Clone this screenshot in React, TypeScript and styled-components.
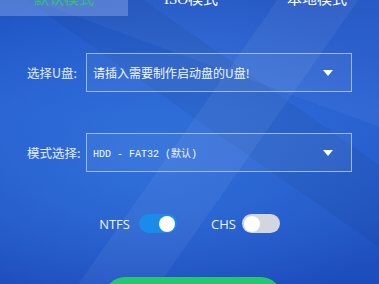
import React, { useState } from "react";
import styled, { createGlobalStyle } from "styled-components";

const GlobalStyle = createGlobalStyle`
  html, body {
    margin: 0;
    padding: 0;
    background: #1f4fbf;
  }
  * {
    box-sizing: border-box;
  }
`;

const Screen = styled.div`
  position: relative;
  width: 379px;
  height: 284px;
  overflow: hidden;
  display: flex;
  flex-direction: column;
  font-family: "Noto Sans CJK SC", "Noto Sans", sans-serif;
  color: #ffffff;
  background:
    linear-gradient(125deg, transparent 0 48%, rgba(255, 255, 255, 0.05) 48% 62%, transparent 62%),
    linear-gradient(35deg, transparent 0 55%, rgba(0, 0, 0, 0.05) 55% 70%, transparent 70%),
    linear-gradient(200deg, rgba(255, 255, 255, 0.04) 0 30%, transparent 30%),
    radial-gradient(ellipse 70% 60% at 40% 55%, #3070db 0%, rgba(48, 112, 219, 0) 100%),
    linear-gradient(180deg, #1f54c4 0%, #2860d0 40%, #2357c6 75%, #1d4bbb 100%);
`;

const TabBar = styled.div`
  display: flex;
  height: 33px;
  margin-top: -17px;
  flex-shrink: 0;
`;

const Tab = styled.div<{ $active?: boolean }>`
  width: 126px;
  flex-shrink: 0;
  text-align: center;
  line-height: 33px;
  font-family: "Liberation Serif", "Noto Sans CJK SC", serif;
  font-size: 15px;
  color: ${({ $active }) => ($active ? "#2fc277" : "#ffffff")};
  background: ${({ $active }) => ($active ? "rgba(140, 170, 235, 0.45)" : "transparent")};
  &:first-child {
    width: 128px;
  }
`;

const Form = styled.div`
  display: flex;
  flex-direction: column;
  gap: 41px;
  padding: 37px 27px 0 27px;
`;

const Row = styled.div`
  display: flex;
  align-items: center;
`;

const Label = styled.div`
  width: 59px;
  flex-shrink: 0;
  font-size: 12.5px;
  color: #e4ebf8;
  white-space: nowrap;
`;

const SelectBox = styled.div`
  width: 266px;
  height: 39px;
  display: flex;
  align-items: center;
  justify-content: space-between;
  padding: 0 18px 0 6px;
  border: 1px solid rgba(190, 210, 245, 0.75);
  background: rgba(255, 255, 255, 0.05);
  cursor: pointer;
`;

const SelectText = styled.span<{ $mono?: boolean }>`
  font-family: ${({ $mono }) =>
    $mono
      ? `"Liberation Mono", "Noto Sans CJK SC", monospace`
      : `"Noto Sans CJK SC", sans-serif`};
  font-size: ${({ $mono }) => ($mono ? "10px" : "12px")};
  color: #f4f7ff;
  white-space: nowrap;
`;

const Arrow = styled.span`
  width: 0;
  height: 0;
  border-left: 5px solid transparent;
  border-right: 5px solid transparent;
  border-top: 6px solid #ffffff;
`;

const Switches = styled.div`
  display: flex;
  justify-content: center;
  align-items: center;
  gap: 34px;
  margin-top: 42px;
`;

const SwitchItem = styled.label<{ $gap: number }>`
  display: flex;
  align-items: center;
  gap: ${({ $gap }) => $gap}px;
  font-family: "Open Sans", "Noto Sans", sans-serif;
  font-size: 13px;
  color: #eef3ff;
  cursor: pointer;
`;

const Track = styled.span<{ $on: boolean }>`
  position: relative;
  width: 38px;
  height: 19px;
  border-radius: 10px;
  background: ${({ $on }) => ($on ? "#1b8bea" : "#d2d6de")};
`;

const Knob = styled.span<{ $on: boolean }>`
  position: absolute;
  top: 1.5px;
  left: ${({ $on }) => ($on ? "20px" : "2px")};
  width: 16px;
  height: 16px;
  border-radius: 50%;
  background: #ffffff;
`;

const StartButton = styled.button`
  align-self: center;
  margin: 44px 0 0 6px;
  width: 176px;
  height: 40px;
  border: none;
  border-radius: 20px;
  background: #27c56f;
  color: #ffffff;
  font-family: "Noto Sans CJK SC", sans-serif;
  font-size: 16px;
  flex-shrink: 0;
`;

function Switch({ label, initial, gap }: { label: string; initial: boolean; gap: number }) {
  const [on, setOn] = useState(initial);
  return (
    <SwitchItem $gap={gap} onClick={() => setOn(!on)}>
      {label}
      <Track $on={on}>
        <Knob $on={on} />
      </Track>
    </SwitchItem>
  );
}

export default function App() {
  const tabs = ["默认模式", "ISO模式", "本地模式"];
  const [active, setActive] = useState(0);

  return (
    <>
      <GlobalStyle />
      <Screen>
        <TabBar>
          {tabs.map((t, i) => (
            <Tab key={t} $active={i === active} onClick={() => setActive(i)}>
              {t}
            </Tab>
          ))}
        </TabBar>
        <Form>
          <Row>
            <Label>选择U盘:</Label>
            <SelectBox>
              <SelectText>请插入需要制作启动盘的U盘!</SelectText>
              <Arrow />
            </SelectBox>
          </Row>
          <Row>
            <Label>模式选择:</Label>
            <SelectBox>
              <SelectText $mono>HDD - FAT32 (默认)</SelectText>
              <Arrow />
            </SelectBox>
          </Row>
        </Form>
        <Switches>
          <Switch label="NTFS" initial={true} gap={9} />
          <Switch label="CHS" initial={false} gap={6} />
        </Switches>
        <StartButton>开始制作</StartButton>
      </Screen>
    </>
  );
}
